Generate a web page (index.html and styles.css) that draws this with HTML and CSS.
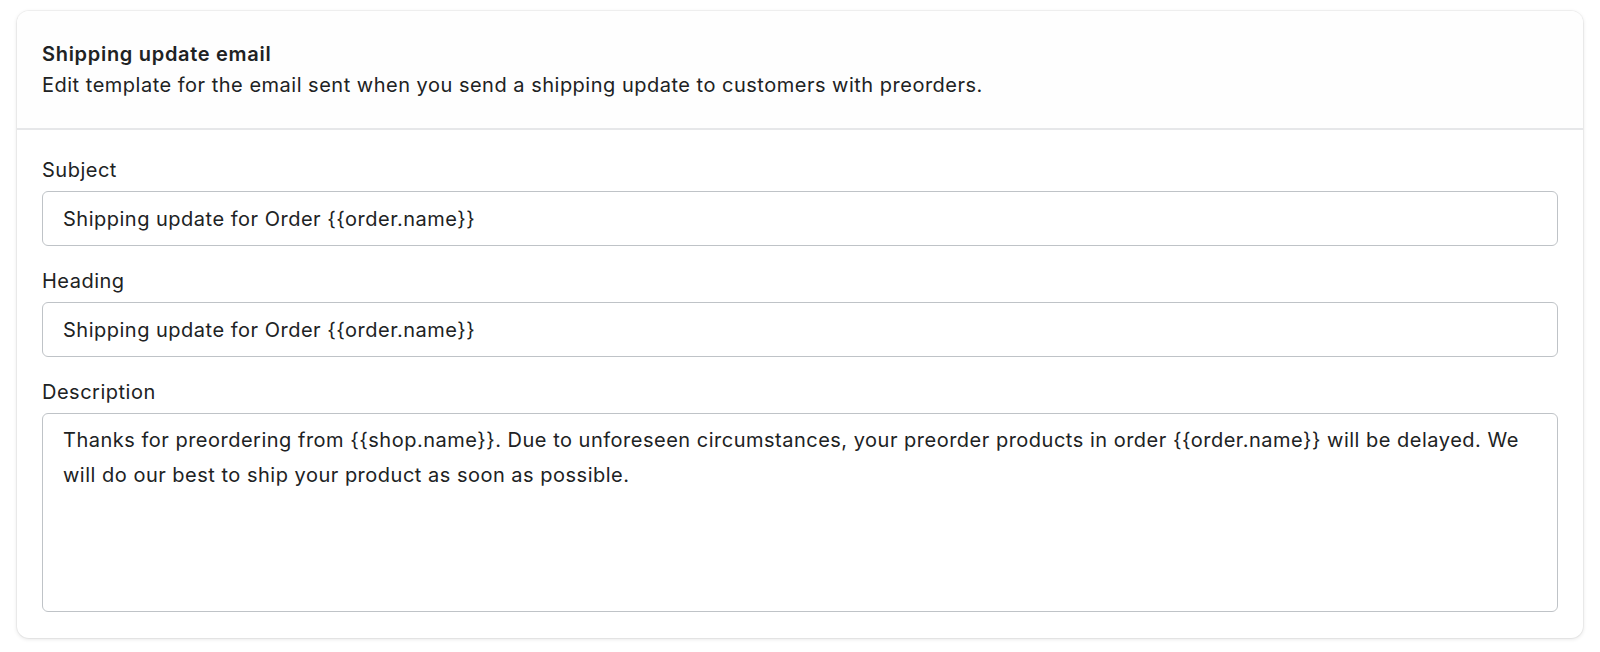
FILE: index.html
```html
<!DOCTYPE html>
<html lang="en">
<head>
    <meta charset="UTF-8">
    <meta name="viewport" content="width=device-width, initial-scale=1.0">
    <title>Shipping update email</title>
    <link rel="stylesheet" href="styles.css">
</head>
<body>
    <div class="card">
        <div class="card-header">
            <h2>Shipping update email</h2>
            <p>Edit template for the email sent when you send a shipping update to customers with preorders.</p>
        </div>

        <form class="card-body">
            <div class="field">
                <label for="subject">Subject</label>
                <input type="text" id="subject" name="subject" value="Shipping update for Order {{order.name}}">
            </div>

            <div class="field">
                <label for="heading">Heading</label>
                <input type="text" id="heading" name="heading" value="Shipping update for Order {{order.name}}">
            </div>

            <div class="field">
                <label for="description">Description</label>
                <textarea id="description" name="description">Thanks for preordering from {{shop.name}}. Due to unforeseen circumstances, your preorder products in order {{order.name}} will be delayed. We will do our best to ship your product as soon as possible.</textarea>
            </div>
        </form>
    </div>
</body>
</html>
```

FILE: styles.css
```css
body {
    font-family: Inter, 'Noto Sans', sans-serif;
    background-color: #fff;
    color: #202223;
    margin: 0;
    padding: 11px 17px;
}

.card {
    background-color: #fff;
    border-radius: 12px;
    box-shadow: 0 0 0 1px rgba(0, 0, 0, 0.04), 0 1px 4px rgba(0, 0, 0, 0.12);
    overflow: hidden;
}

.card-header {
    padding: 29px 25px 29px;
    background-color: #fefefe;
    border-bottom: 2px solid #e6e7e9;
}

.card-header h2 {
    margin: 0;
    font-size: 20px;
    font-weight: 600;
    line-height: 28px;
    letter-spacing: 0.7px;
}

.card-header p {
    margin: 3px 0 0;
    font-size: 20px;
    line-height: 28px;
    letter-spacing: 0.5px;
}

.card-body {
    padding: 26px 25px 26px;
    display: flex;
    flex-direction: column;
    gap: 21px;
}

.field {
    display: flex;
    flex-direction: column;
    gap: 7px;
}

.field label {
    font-size: 20px;
    line-height: 28px;
    letter-spacing: 0.5px;
}

.field input,
.field textarea {
    font-family: inherit;
    font-size: 20px;
    letter-spacing: 0.5px;
    color: #202223;
    border: 1px solid #bfc3c7;
    border-radius: 6px;
    background-color: #fff;
    padding: 0 20px;
    margin: 0;
    box-sizing: border-box;
    width: 100%;
}

.field input {
    height: 55px;
}

.field textarea {
    height: 199px;
    padding: 9px 20px;
    line-height: 35px;
    resize: none;
}
```
